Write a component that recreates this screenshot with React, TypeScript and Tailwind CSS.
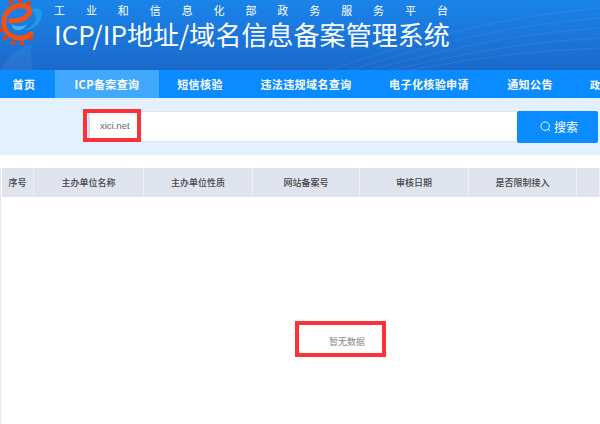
const navItems = [
  { label: "首页", width: "w-[48px]" },
  { label: "ICP备案查询", width: "w-[104px] ml-[7px]", active: true },
  { label: "短信核验", width: "w-[82px]" },
  { label: "违法违规域名查询", width: "w-[130px]" },
  { label: "电子化核验申请", width: "w-[116px]" },
  { label: "通知公告", width: "w-[86px]" },
];

const columns = [
  { label: "序号", width: "w-[32px]" },
  { label: "主办单位名称", width: "w-[110px]" },
  { label: "主办单位性质", width: "w-[109px]" },
  { label: "网站备案号", width: "w-[107px]" },
  { label: "审核日期", width: "w-[109px]" },
  { label: "是否限制接入", width: "w-[108px]" },
  { label: "", width: "flex-1" },
];

const font = "font-['Noto_Sans_CJK_SC','Liberation_Sans',sans-serif]";

function Logo() {
  const dots = [[11, 2], [20, 1], [29, 3], [1, 30], [5, 38], [13, 43], [22, 43], [31, 38]];
  return (
    <svg viewBox="0 0 48 48" className="h-[48px] w-[48px] shrink-0" fill="none" strokeLinecap="round">
      <path d="M31 9c7-2 12 0 11 6-1 8-9 16-19 15 8-2 13-7 13-13 0-3-2-6-5-8z" fill="#1e9be6" />
      <path d="M12 24c4 3 11 3 15 0-2 5-9 8-13 5-2-1-2-3-2-5z" fill="#45b0ee" />
      <path d="M31 34C23 41 10 39 5 29 1 18 8 6 20 6c9-1 12 5 8 9-4 5-11 6-17 6" stroke="#f4500e" strokeWidth="5" />
      {dots.map(([x, y]) => (
        <circle key={`${x}-${y}`} cx={x} cy={y} r="2.3" fill="#e8400c" />
      ))}
    </svg>
  );
}

export default function App() {
  return (
    <div className={`relative h-[424px] w-[600px] overflow-hidden bg-white ${font}`}>
      <header className="relative flex h-[70px] items-start overflow-hidden bg-gradient-to-b from-[#1a84ea] to-[#1b69cb]">
        <svg viewBox="0 0 600 70" className="absolute inset-0 h-[70px] w-[600px]" fill="none" stroke="#ffffff" strokeOpacity="0.07">
          <path d="M0 70c8-14 22-24 32-26-2 8 0 18 1 26z" fill="#ffffff" fillOpacity="0.06" stroke="none" />
          <path d="M330 70c60-20 140-50 270-62" />
          <path d="M350 70c60-18 130-42 250-52" />
          <path d="M370 70c60-15 120-34 230-42" />
          <path d="M390 70c60-12 110-26 210-32" />
          <path d="M410 70c60-10 100-18 190-22" />
        </svg>
        <div className="relative flex items-start">
          <Logo />
          <div className="ml-[6px] flex flex-col">
            <div className="mt-[3px] flex w-[394px] justify-between text-[11px] leading-[14px] text-white">
              {"工业和信息化部政务服务平台".split("").map((ch, i) => (
                <span key={i}>{ch}</span>
              ))}
            </div>
            <h1 className="mt-[2px] whitespace-nowrap text-[26px] leading-[30px] font-normal tracking-[0.05px] text-white">
              ICP/IP地址/域名信息备案管理系统
            </h1>
          </div>
        </div>
      </header>

      <nav className="flex h-[28px] overflow-hidden bg-[#0a8bff]">
        {navItems.map((item) => (
          <div
            key={item.label}
            className={`flex shrink-0 items-center justify-center whitespace-nowrap text-[11px] font-bold tracking-[0.4px] text-white ${item.width} ${item.active ? "bg-[#40a9ff]" : ""}`}
          >
            {item.label}
          </div>
        ))}
        <div className="flex items-center pl-[17px] text-[10px] font-bold text-white">政</div>
      </nav>

      <section className="flex h-[57px] items-center bg-[#e3f1ff] pl-[88px] pr-[2px]">
        <div className="flex h-[31px] flex-1 items-center border-y border-[#e4e4e4] border-l-2 border-l-[#d5deee] bg-white pl-[10px] font-['Liberation_Sans',sans-serif] text-[9.5px] text-[#666]">
          xici.net
        </div>
        <button className="flex h-[32px] w-[81px] items-center justify-center gap-[3px] rounded-[2px] bg-[#0a8bff] pl-[3px] text-[12px] text-white">
          <svg viewBox="0 0 12 12" className="h-[11px] w-[11px]" fill="none" stroke="currentColor" strokeWidth="1">
            <circle cx="5.6" cy="5.6" r="4.6" />
            <path d="M9 9l2 2" />
          </svg>
          搜索
        </button>
      </section>

      <section className="mt-[13px] flex h-[256px] flex-col border-l border-[#e8e8e8] pl-[1px]">
        <div className="flex h-[29px] bg-[#e0e4ef]">
          {columns.map((col, i) => (
            <div
              key={i}
              className={`flex shrink-0 items-center justify-center border-r border-[#eef0f6] text-[9px] font-medium text-[#444] ${col.width}`}
            >
              {col.label}
            </div>
          ))}
        </div>
        <div className="flex flex-1 justify-center pl-[92px] pt-[138px] text-[9px] text-[#888]">
          暂无数据
        </div>
      </section>

      {/* red marker boxes drawn over the screenshot */}
      <div className="absolute left-[83px] top-[109px] h-[33px] w-[58px] border-[4px] border-[#fc3238]" />
      <div className="absolute left-[295px] top-[321px] h-[36px] w-[91px] border-[4px] border-[#fc3238]" />
    </div>
  );
}
